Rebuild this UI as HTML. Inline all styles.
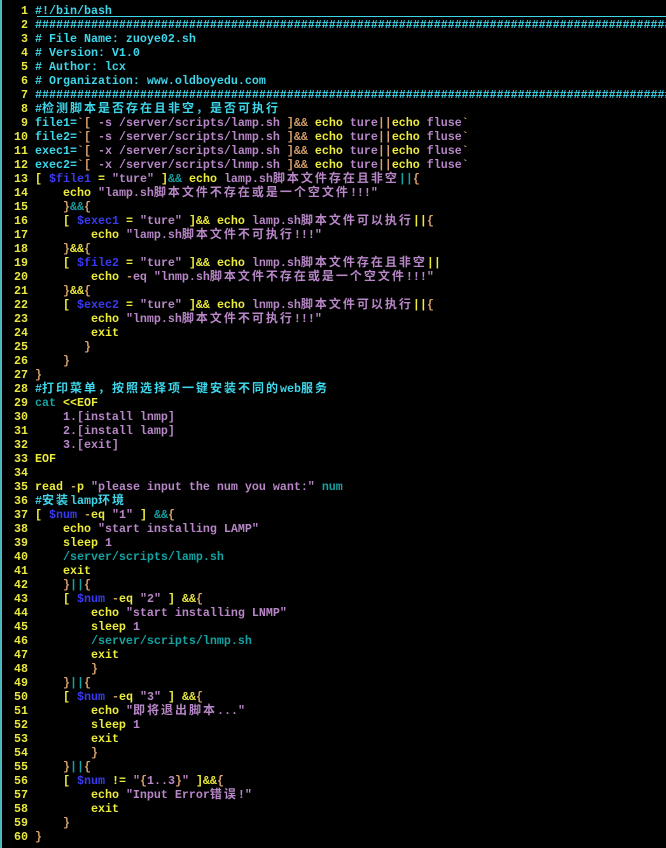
<!DOCTYPE html>
<html><head><meta charset="utf-8">
<style>
html,body{margin:0;padding:0;background:#000;width:666px;height:848px;overflow:hidden;}
body{border-left:2px solid #4fb8c0;box-sizing:border-box;position:relative;}
pre{margin:0;position:absolute;left:5px;top:4px;width:661px;overflow:hidden;font-family:"Liberation Mono","Noto Sans CJK SC",monospace;font-size:11.67px;line-height:14px;font-weight:bold;color:#b887c8;white-space:pre;}
.n{color:#e8e840;}
.y{color:#eded3c;}
.c{color:#3ed6ea;}
.p{color:#b887c8;}
.t{color:#d6a06c;}
.g{color:#13a3a3;}
.b{color:#3a3af2;}
i{font-style:normal;font-family:"Noto Sans CJK SC","WenQuanYi Zen Hei",sans-serif;font-size:12px;letter-spacing:2px;line-height:0;}
.ul{position:absolute;left:35px;right:0;top:16px;height:1px;background:#3ed6ea;}
</style></head><body>
<div class="ul"></div>
<pre><span class="n">  1 </span><span class="c">#!/bin/bash</span>
<span class="n">  2 </span><span class="c">####################################################################################################</span>
<span class="n">  3 </span><span class="c"># File Name: zuoye02.sh</span>
<span class="n">  4 </span><span class="c"># Version: V1.0</span>
<span class="n">  5 </span><span class="c"># Author: lcx</span>
<span class="n">  6 </span><span class="c"># Organization: www.oldboyedu.com</span>
<span class="n">  7 </span><span class="c">####################################################################################################</span>
<span class="n">  8 </span><span class="c">#<i>检测脚本是否存在且非空，是否可执行</i></span>
<span class="n">  9 </span><span class="c">file1=</span><span class="t">`[</span> <span class="p">-s /server/scripts/lamp.sh</span> <span class="t">]&amp;&amp;</span> <span class="y">echo</span> <span class="p">ture</span><span class="t">||</span><span class="y">echo</span> <span class="p">fluse</span><span class="t">`</span>
<span class="n"> 10 </span><span class="c">file2=</span><span class="t">`[</span> <span class="p">-s /server/scripts/lnmp.sh</span> <span class="t">]&amp;&amp;</span> <span class="y">echo</span> <span class="p">ture</span><span class="t">||</span><span class="y">echo</span> <span class="p">fluse</span><span class="t">`</span>
<span class="n"> 11 </span><span class="c">exec1=</span><span class="t">`[</span> <span class="p">-x /server/scripts/lamp.sh</span> <span class="t">]&amp;&amp;</span> <span class="y">echo</span> <span class="p">ture</span><span class="t">||</span><span class="y">echo</span> <span class="p">fluse</span><span class="t">`</span>
<span class="n"> 12 </span><span class="c">exec2=</span><span class="t">`[</span> <span class="p">-x /server/scripts/lnmp.sh</span> <span class="t">]&amp;&amp;</span> <span class="y">echo</span> <span class="p">ture</span><span class="t">||</span><span class="y">echo</span> <span class="p">fluse</span><span class="t">`</span>
<span class="n"> 13 </span><span class="y">[</span> <span class="b">$file1</span> <span class="y">=</span> <span class="p">"ture"</span> <span class="y">]</span><span class="g">&amp;&amp;</span> <span class="y">echo</span> <span class="p">lamp.sh<i>脚本文件存在且非空</i></span><span class="g">||</span><span class="t">{</span>
<span class="n"> 14 </span>    <span class="y">echo</span> <span class="p">"lamp.sh<i>脚本文件不存在或是一个空文件</i>!!!"</span>
<span class="n"> 15 </span>    <span class="t">}</span><span class="g">&amp;&amp;</span><span class="t">{</span>
<span class="n"> 16 </span>    <span class="y">[</span> <span class="b">$exec1</span> <span class="y">=</span> <span class="p">"ture"</span> <span class="y">]&amp;&amp;</span> <span class="y">echo</span> <span class="p">lamp.sh<i>脚本文件可以执行</i></span><span class="y">||</span><span class="t">{</span>
<span class="n"> 17 </span>        <span class="y">echo</span> <span class="p">"lamp.sh<i>脚本文件不可执行</i>!!!"</span>
<span class="n"> 18 </span>    <span class="t">}</span><span class="y">&amp;&amp;</span><span class="t">{</span>
<span class="n"> 19 </span>    <span class="y">[</span> <span class="b">$file2</span> <span class="y">=</span> <span class="p">"ture"</span> <span class="y">]&amp;&amp;</span> <span class="y">echo</span> <span class="p">lnmp.sh<i>脚本文件存在且非空</i></span><span class="y">||</span>
<span class="n"> 20 </span>        <span class="y">echo</span> <span class="t">-</span><span class="p">eq "lnmp.sh<i>脚本文件不存在或是一个空文件</i>!!!"</span>
<span class="n"> 21 </span>    <span class="t">}</span><span class="y">&amp;&amp;</span><span class="t">{</span>
<span class="n"> 22 </span>    <span class="y">[</span> <span class="b">$exec2</span> <span class="y">=</span> <span class="p">"ture"</span> <span class="y">]&amp;&amp;</span> <span class="y">echo</span> <span class="p">lnmp.sh<i>脚本文件可以执行</i></span><span class="y">||</span><span class="t">{</span>
<span class="n"> 23 </span>        <span class="y">echo</span> <span class="p">"lnmp.sh<i>脚本文件不可执行</i>!!!"</span>
<span class="n"> 24 </span>        <span class="y">exit</span>
<span class="n"> 25 </span>       <span class="t">}</span>
<span class="n"> 26 </span>    <span class="t">}</span>
<span class="n"> 27 </span><span class="t">}</span>
<span class="n"> 28 </span><span class="c">#<i>打印菜单，按照选择项一键安装不同的</i>web<i>服务</i></span>
<span class="n"> 29 </span><span class="g">cat</span> <span class="y">&lt;&lt;EOF</span>
<span class="n"> 30 </span>    <span class="p">1.[install lnmp]</span>
<span class="n"> 31 </span>    <span class="p">2.[install lamp]</span>
<span class="n"> 32 </span>    <span class="p">3.[exit]</span>
<span class="n"> 33 </span><span class="y">EOF</span>
<span class="n"> 34 </span>
<span class="n"> 35 </span><span class="y">read</span> <span class="t">-</span><span class="y">p</span> <span class="p">"please input the num you want:"</span> <span class="g">num</span>
<span class="n"> 36 </span><span class="c">#<i>安装</i>lamp<i>环境</i></span>
<span class="n"> 37 </span><span class="y">[</span> <span class="b">$num</span> <span class="t">-</span><span class="y">eq</span> <span class="p">"1"</span> <span class="y">]</span> <span class="g">&amp;&amp;</span><span class="t">{</span>
<span class="n"> 38 </span>    <span class="y">echo</span> <span class="p">"start installing LAMP"</span>
<span class="n"> 39 </span>    <span class="y">sleep</span> <span class="p">1</span>
<span class="n"> 40 </span>    <span class="g">/server/scripts/lamp.sh</span>
<span class="n"> 41 </span>    <span class="y">exit</span>
<span class="n"> 42 </span>    <span class="t">}</span><span class="g">||</span><span class="t">{</span>
<span class="n"> 43 </span>    <span class="y">[</span> <span class="b">$num</span> <span class="t">-</span><span class="y">eq</span> <span class="p">"2"</span> <span class="y">]</span> <span class="y">&amp;&amp;</span><span class="t">{</span>
<span class="n"> 44 </span>        <span class="y">echo</span> <span class="p">"start installing LNMP"</span>
<span class="n"> 45 </span>        <span class="y">sleep</span> <span class="p">1</span>
<span class="n"> 46 </span>        <span class="g">/server/scripts/lnmp.sh</span>
<span class="n"> 47 </span>        <span class="y">exit</span>
<span class="n"> 48 </span>        <span class="t">}</span>
<span class="n"> 49 </span>    <span class="t">}</span><span class="g">||</span><span class="t">{</span>
<span class="n"> 50 </span>    <span class="y">[</span> <span class="b">$num</span> <span class="t">-</span><span class="y">eq</span> <span class="p">"3"</span> <span class="y">]</span> <span class="y">&amp;&amp;</span><span class="t">{</span>
<span class="n"> 51 </span>        <span class="y">echo</span> <span class="p">"<i>即将退出脚本</i>..."</span>
<span class="n"> 52 </span>        <span class="y">sleep</span> <span class="p">1</span>
<span class="n"> 53 </span>        <span class="y">exit</span>
<span class="n"> 54 </span>        <span class="t">}</span>
<span class="n"> 55 </span>    <span class="t">}</span><span class="g">||</span><span class="t">{</span>
<span class="n"> 56 </span>    <span class="y">[</span> <span class="b">$num</span> <span class="y">!=</span> <span class="p">"</span><span class="t">{</span><span class="p">1..3</span><span class="t">}</span><span class="p">"</span> <span class="y">]&amp;&amp;</span><span class="t">{</span>
<span class="n"> 57 </span>        <span class="y">echo</span> <span class="p">"Input Error<i>错误</i>!"</span>
<span class="n"> 58 </span>        <span class="y">exit</span>
<span class="n"> 59 </span>    <span class="t">}</span>
<span class="n"> 60 </span><span class="t">}</span></pre>
</body></html>
